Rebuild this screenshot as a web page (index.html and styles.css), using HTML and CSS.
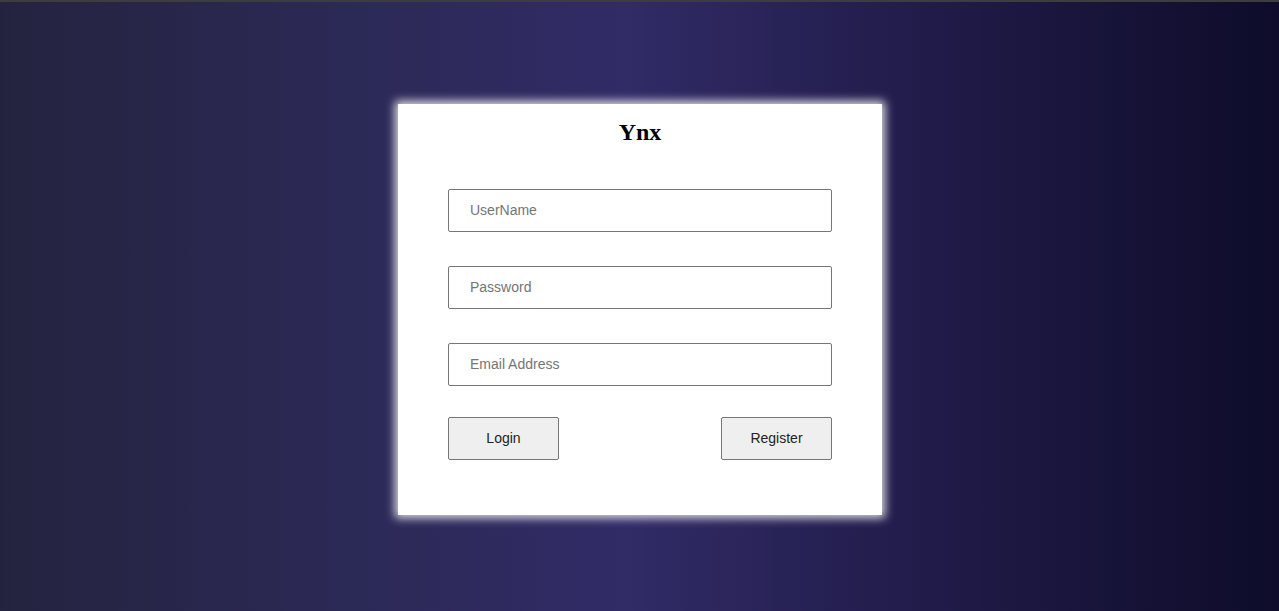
FILE: index.html
```html
<!DOCTYPE html>
<html lang="en">
<head>
<meta charset="utf-8">
<title>Ynx</title>
<link rel="stylesheet" href="styles.css">
</head>
<body>
<div class="topline"></div>
<main class="stage">
  <div class="card">
    <h2 class="title">Ynx</h2>
    <form class="form">
      <input class="field" type="text" placeholder="UserName">
      <input class="field" type="password" placeholder="Password">
      <input class="field" type="email" placeholder="Email Address">
      <div class="actions">
        <button type="button" class="btn">Login</button>
        <button type="button" class="btn">Register</button>
      </div>
    </form>
  </div>
</main>
</body>
</html>
```
FILE: styles.css
```css
html, body {
  margin: 0;
  padding: 0;
  height: 100%;
}
body {
  background: linear-gradient(90deg, #24233f 0%, #2c2a58 30%, #312b66 49%, #221d4c 70%, #0e0c2a 100%);
  font-family: "Liberation Sans", Arial, sans-serif;
  overflow: hidden;
}
.topline {
  height: 2px;
  background: #3d3d3f;
}
.stage {
  display: flex;
  justify-content: center;
  padding-top: 102px;
  padding-left: 1px;
}
.card {
  width: 484px;
  height: 411px;
  box-sizing: border-box;
  background: #ffffff;
  box-shadow: 0 0 9px 3px rgba(255, 255, 255, 0.85);
  padding: 0 50px;
}
.title {
  margin: 14px 0 0;
  text-align: center;
  font-family: "Liberation Serif", "Times New Roman", serif;
  font-weight: bold;
  font-size: 24px;
  line-height: 28px;
  color: #000;
}
.form {
  margin-top: 43px;
  display: flex;
  flex-direction: column;
  gap: 34px;
}
.field {
  display: block;
  width: 384px;
  height: 43px;
  box-sizing: border-box;
  border: 1px solid #767676;
  border-radius: 2px;
  padding: 0 21px 2px;
  font-family: "Liberation Sans", Arial, sans-serif;
  font-size: 14px;
  color: #222;
  background: #fff;
  outline: none;
}
.field::placeholder {
  color: #757575;
}
.actions {
  display: flex;
  justify-content: space-between;
  margin-top: -3px;
}
.btn {
  width: 111px;
  height: 43px;
  box-sizing: border-box;
  border: 1px solid #767676;
  border-radius: 2px;
  background: #efefef;
  font-family: "Liberation Sans", Arial, sans-serif;
  font-size: 14px;
  color: #222;
  padding: 0 0 2px;
}
```
